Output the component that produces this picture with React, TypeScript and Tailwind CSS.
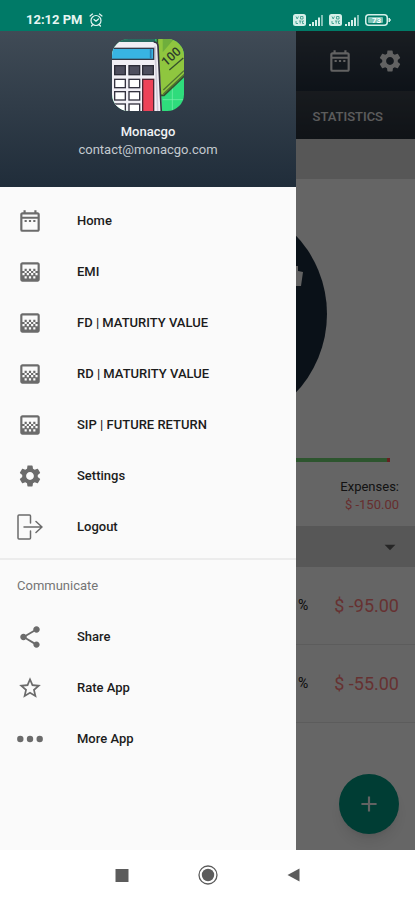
import { useState } from 'react';
import type { ReactNode } from 'react';
import { MdOutlineDateRange, MdGradient, MdSettings, MdShare, MdStarBorder, MdArrowDropDown, MdAdd } from 'react-icons/md';

interface MenuItem {
  label: string;
  icon: ReactNode;
}

const LogoutIcon = () => (
  <svg className="h-[26px] w-[26px]" viewBox="0 0 26 26" fill="none" stroke="currentColor" strokeWidth="1.5" strokeLinecap="round" strokeLinejoin="round">
    <path d="M13.5 9V2a1 1 0 0 0-1-1H2a1 1 0 0 0-1 1v22a1 1 0 0 0 1 1h10.500a1 1 0 0 0 1-1v-7" />
    <path d="M7 13h18M19 7.500l6 5.500-6 5.500" />
  </svg>
);

const MoreIcon = () => (
  <svg className="h-[26px] w-[26px]" viewBox="0 0 26 26" fill="currentColor">
    <circle cx="3.300" cy="13" r="3.200" />
    <circle cx="13" cy="13" r="3.200" />
    <circle cx="22.700" cy="13" r="3.200" />
  </svg>
);

const mainItems: MenuItem[] = [
  { label: 'Home', icon: <MdOutlineDateRange size={26} /> },
  { label: 'EMI', icon: <MdGradient size={26} /> },
  { label: 'FD | MATURITY VALUE', icon: <MdGradient size={26} /> },
  { label: 'RD | MATURITY VALUE', icon: <MdGradient size={26} /> },
  { label: 'SIP | FUTURE RETURN', icon: <MdGradient size={26} /> },
  { label: 'Settings', icon: <MdSettings size={26} /> },
  { label: 'Logout', icon: <LogoutIcon /> },
];

const communicateItems: MenuItem[] = [
  { label: 'Share', icon: <MdShare size={26} /> },
  { label: 'Rate App', icon: <MdStarBorder size={26} /> },
  { label: 'More App', icon: <MoreIcon /> },
];

const expenses = [
  { id: 1, amount: '$ -95.00' },
  { id: 2, amount: '$ -55.00' },
];

function SimIcon() {
  return (
    <svg className="h-3 w-8" viewBox="0 0 32 12" fill="#d5efe9">
      <rect width="13" height="12" rx="2.500" />
      <g stroke="#4aa595" strokeWidth="1" fill="none">
        <path d="M3 2.500l1.200 2.500 1.200-2.500M7.500 2.500h2.500v2.500H7.500zM3 7v2.500h2M6 7h2.500M7.200 7v2.500M11 7H9.500v2.500H11" />
      </g>
      <path d="M16 10h2v2h-2zM19 8h2v4h-2zM22 6h2v6h-2zM25 3.500h2V12h-2z" />
      <path d="M28 1h2v11h-2z" opacity=".6" />
    </svg>
  );
}

function StatusBar() {
  return (
    <div className="flex h-[31px] items-center justify-between bg-[#007a67] pt-2 pr-6 pl-[26px] text-[#e6f5f2]">
      <div className="flex items-center gap-1.5">
        <span className="text-[13px] leading-4 font-bold">12:12 PM</span>
        <svg className="h-3.5 w-3.5" viewBox="0 0 14 14" fill="none" stroke="currentColor" strokeWidth="1.200" strokeLinecap="round">
          <circle cx="7" cy="7.500" r="5" />
          <path d="M1 3l2.500-2M13 3l-2.500-2M5 6.500l2 1.700 2.500-2.200M3.500 12l-1 1M10.500 12l1 1" />
        </svg>
      </div>
      <div className="flex items-center gap-1">
        <SimIcon />
        <SimIcon />
        <svg className="h-3 w-[26px]" viewBox="0 0 26 12" fill="none" stroke="#d5efe9">
          <rect x=".75" y=".75" width="21.500" height="10.500" rx="3" strokeWidth="1.500" />
          <rect x="3" y="3" width="15" height="6" rx="1" fill="#7cc4b6" stroke="none" />
          <path d="M24 4l1.500 2L24 8z" fill="#d5efe9" />
          <text x="11.500" y="9" textAnchor="middle" fontSize="8" fontWeight="700" fill="#fff" stroke="none">73</text>
        </svg>
      </div>
    </div>
  );
}

function AppLogo() {
  const columns = [32, 75, 116];
  return (
    <svg className="h-[72px] w-[72px]" viewBox="24 15 216 216" role="img" aria-label="Monacgo">
      <clipPath id="logo-shape">
        <rect x="24" y="15" width="216" height="216" rx="50" />
      </clipPath>
      <g clipPath="url(#logo-shape)">
        <rect x="24" y="15" width="216" height="216" fill="#2fdc7c" />
        <path d="M24 15h130v12H24z" fill="#276a60" />
        <path d="M176 197h64M205 160v71" stroke="#7cf0ae" strokeWidth="2" />
        <path d="M160 10h85v112l-65 62h-20z" fill="#8fc63f" stroke="#33522f" strokeWidth="5" />
        <path d="M176 15h34l-34 40z" fill="#6fae3c" />
        <path d="M178 168l62-58M178 180l64-60" stroke="#4f7432" strokeWidth="4" />
        <path d="M196 108l42-36" stroke="#35502c" strokeWidth="4" />
        <text x="186" y="98" transform="rotate(-42 186 98)" fontSize="37" fontWeight="500" fill="#2b3b2b">100</text>
        <path d="M20 24h130q12 0 13 12l11 200H20z" fill="#f1eff5" />
        <path d="M149 24q12 0 13 12l10 200" fill="none" stroke="#34323f" strokeWidth="5" />
        <path d="M153 37l8 194" stroke="#d0ccd9" strokeWidth="5" />
        <rect x="15" y="43" width="134" height="33" fill="#38b4e3" stroke="#343b4a" strokeWidth="4" />
        <path d="M140 46v27" stroke="#2b7fb0" strokeWidth="5" />
        {columns.map((x) => (
          <rect key={x} x={x} y="95" width="32" height="27" fill="#4e4e5e" stroke="#2c2c38" strokeWidth="4" />
        ))}
        {[136, 173, 210].map((y) =>
          columns.slice(0, 2).map((x) => (
            <rect key={`${x}-${y}`} x={x} y={y} width="32" height="25" fill="#fff" stroke="#34323f" strokeWidth="4" />
          ))
        )}
        <rect x="116" y="136" width="33" height="110" fill="#ed4258" stroke="#4b2634" strokeWidth="4" />
      </g>
    </svg>
  );
}

function MenuList({ items, onSelect }: { items: MenuItem[]; onSelect: (label: string) => void }) {
  return (
    <ul>
      {items.map((item) => (
        <li key={item.label}>
          <button onClick={() => onSelect(item.label)} className="flex h-[51px] w-full items-center gap-[34px] pl-[17px] text-left">
            <span className="text-[#6b6b6b]">{item.icon}</span>
            <span className="text-[13px] leading-5 font-medium text-[#1c1c1c]">{item.label}</span>
          </button>
        </li>
      ))}
    </ul>
  );
}

function Drawer({ onSelect }: { onSelect: (label: string) => void }) {
  return (
    <aside className="absolute inset-y-0 left-0 w-[296px] bg-[#fafafa]">
      <div className="flex h-[156px] flex-col items-center bg-linear-to-b from-[#404b56] to-[#202d3a] pt-2">
        <AppLogo />
        <p className="mt-3 text-[13px] leading-[18px] font-medium text-[#f0f2f4]">Monacgo</p>
        <p className="text-[13px] leading-[18px] text-[#c3c9cf]">contact@monacgo.com</p>
      </div>
      <nav className="pt-2">
        <MenuList items={mainItems} onSelect={onSelect} />
        <div className="mt-1.5 border-t-2 border-[#ececec]">
          <h2 className="flex h-[51px] items-center pl-[17px] text-[13px] leading-5 text-[#757575]">Communicate</h2>
          <MenuList items={communicateItems} onSelect={onSelect} />
        </div>
      </nav>
    </aside>
  );
}

function Overview() {
  return (
    <main className="flex h-full flex-col bg-[#fcfcfc]">
      <header>
        <div className="flex h-[60px] items-center justify-end gap-6 bg-linear-to-b from-[#414b56] to-[#232f3e] pr-3 text-[#f4f4f4]">
          <button aria-label="Calendar"><MdOutlineDateRange size={26} /></button>
          <button aria-label="Settings"><MdSettings size={26} /></button>
        </div>
        <div className="flex h-12 items-center justify-end bg-linear-to-b from-[#3d444d] to-[#29313b] pt-1 pr-8">
          <button className="text-[13px] leading-5 font-medium text-[#e6e6e6]">STATISTICS</button>
        </div>
      </header>
      <div className="h-10 bg-[#dadada]" />
      <section className="flex flex-col pt-5">
        <svg className="ml-2 h-[230px] w-[230px] self-center" viewBox="0 0 230 230">
          <circle cx="115" cy="115" r="115" fill="#1b2c3c" />
          <path d="M190 67h11v5l5 1-2 14h-14z" fill="#f5f5f5" />
        </svg>
        <div className="mt-[29px] mr-[25px] flex h-1">
          <div className="flex-1 bg-[#70d474]" />
          <div className="w-[3px] bg-[#ff5050]" />
        </div>
        <div className="mt-4 mb-3 pr-4 text-right text-[13px] leading-[18px]">
          <p className="text-[#303030]">Expenses:</p>
          <p className="text-[#ff7474]">$ -150.00</p>
        </div>
      </section>
      <div className="flex h-[41px] items-center justify-end bg-[#d9d9d9] pr-3 text-[#606060]">
        <button aria-label="Sort expenses"><MdArrowDropDown size={26} /></button>
      </div>
      <ul>
        {expenses.map((item) => (
          <li key={item.id} className="flex h-[78px] items-center justify-end gap-[26px] border-b border-[#e6e6e6] pr-4">
            <span className="text-[14px] text-[#202020]">%</span>
            <span className="text-[18px] text-[#ff7c7c]">{item.amount}</span>
          </li>
        ))}
      </ul>
      <button aria-label="Add expense" className="absolute right-4 bottom-4 flex h-[60px] w-[60px] items-center justify-center rounded-full bg-[#009882] text-[#f5f5f5] shadow-lg">
        <MdAdd size={26} />
      </button>
    </main>
  );
}

export default function App() {
  const [open, setOpen] = useState(true);

  return (
    <div className="flex min-h-screen flex-col bg-white font-[Roboto,sans-serif]">
      <StatusBar />
      <div className="relative min-h-[819px] flex-1 overflow-hidden">
        <Overview />
        {open && (
          <>
            <div className="absolute inset-0 bg-black/60" onClick={() => setOpen(false)} />
            <Drawer onSelect={() => setOpen(false)} />
          </>
        )}
      </div>
      <div className="flex h-[50px] items-center justify-center gap-[66px] text-[#5c5c5c]">
        <button aria-label="Recent apps">
          <svg className="h-5 w-5" viewBox="0 0 20 20" fill="currentColor"><path d="M3.500 4h13v13h-13z" /></svg>
        </button>
        <button aria-label="Home screen">
          <svg className="h-5 w-5" viewBox="0 0 20 20">
            <circle cx="10" cy="10" r="9" fill="none" stroke="currentColor" strokeWidth="1.300" />
            <circle cx="10" cy="10" r="6.200" fill="currentColor" />
          </svg>
        </button>
        <button aria-label="Back">
          <svg className="h-5 w-5" viewBox="0 0 20 20" fill="currentColor"><path d="M15.500 3.500v13L3.500 10z" /></svg>
        </button>
      </div>
    </div>
  );
}
